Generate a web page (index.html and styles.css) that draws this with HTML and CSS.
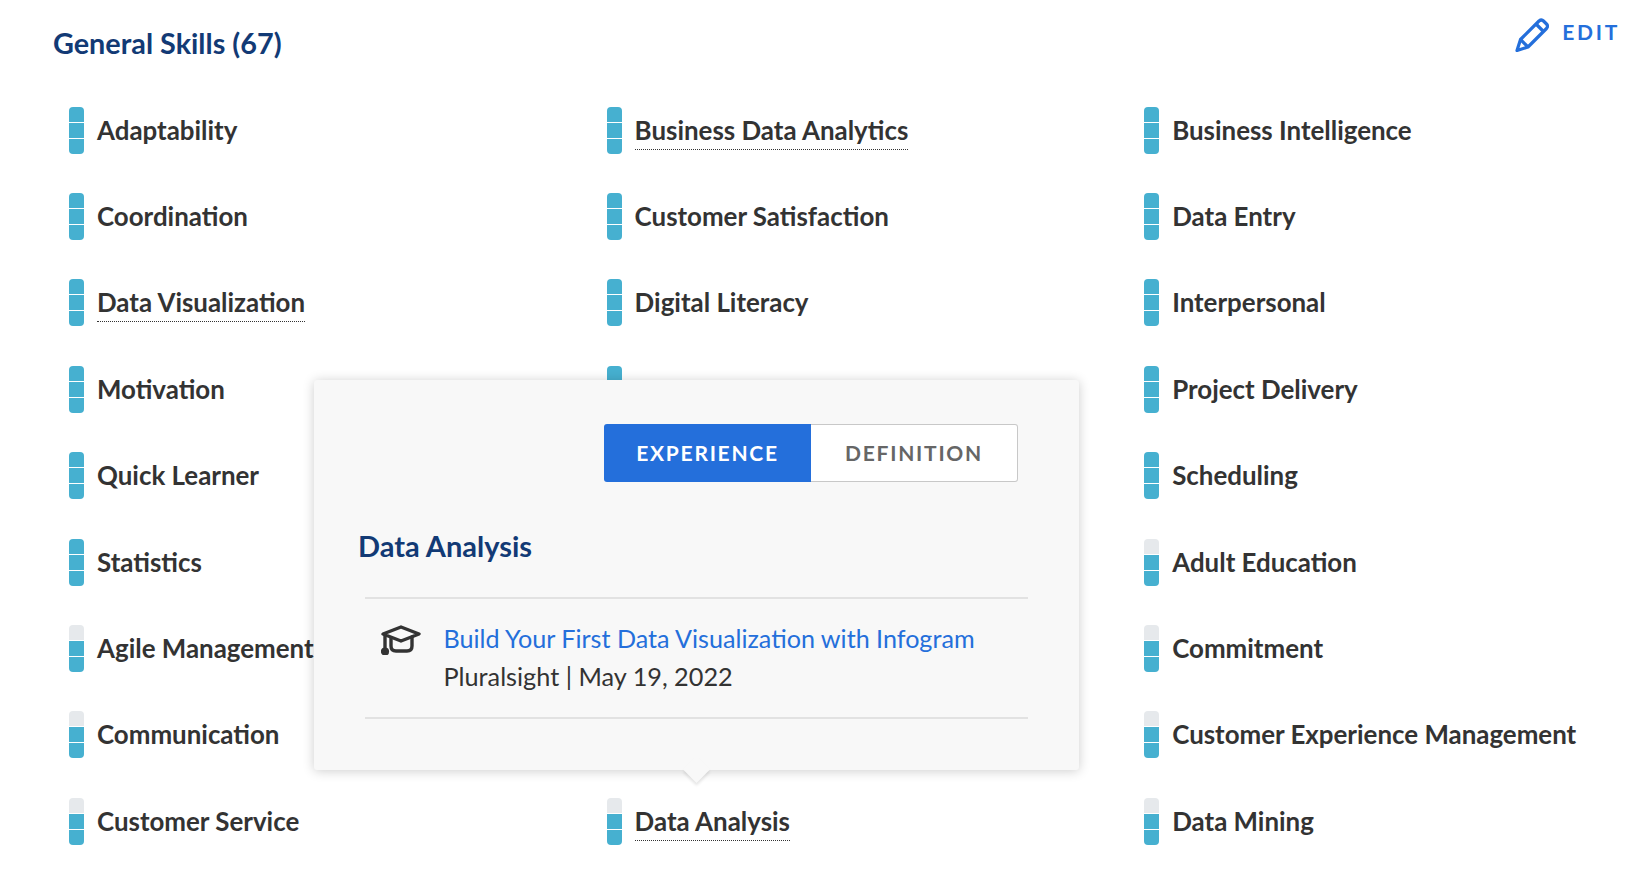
FILE: index.html
```html
<!DOCTYPE html>
<html lang="en">
<head>
  <meta charset="UTF-8" />
  <title>General Skills</title>
  <link rel="stylesheet" href="styles.css">
</head>
<body>

  <header class="skills-head">
    <h2>General Skills (67)</h2>
    <a class="edit-btn">
      <svg class="edit-icon" viewBox="0 0 34 34" fill="none" stroke="currentColor" stroke-width="3.2" stroke-linejoin="round">
        <path d="M2 32.5 L5.5 21.5 L24 3 Q26.5 1 28.5 3 L31.5 6 Q33.5 8 31.5 10.5 L13 29 Z"/>
        <path d="M21 6 L28.5 13.5"/>
        <path d="M5.5 21.5 L13 29"/>
      </svg>
      EDIT
    </a>
  </header>

  <div class="skills-grid">
    <div class="skill"><span class="bar"><i></i><i></i><i></i></span><span class="name">Adaptability</span></div>
    <div class="skill"><span class="bar"><i></i><i></i><i></i></span><span class="name dotted">Business Data Analytics</span></div>
    <div class="skill"><span class="bar"><i></i><i></i><i></i></span><span class="name">Business Intelligence</span></div>

    <div class="skill"><span class="bar"><i></i><i></i><i></i></span><span class="name">Coordination</span></div>
    <div class="skill"><span class="bar"><i></i><i></i><i></i></span><span class="name">Customer Satisfaction</span></div>
    <div class="skill"><span class="bar"><i></i><i></i><i></i></span><span class="name">Data Entry</span></div>

    <div class="skill"><span class="bar"><i></i><i></i><i></i></span><span class="name dotted">Data Visualization</span></div>
    <div class="skill"><span class="bar"><i></i><i></i><i></i></span><span class="name">Digital Literacy</span></div>
    <div class="skill"><span class="bar"><i></i><i></i><i></i></span><span class="name">Interpersonal</span></div>

    <div class="skill"><span class="bar"><i></i><i></i><i></i></span><span class="name">Motivation</span></div>
    <div class="skill"><span class="bar"><i></i><i></i><i></i></span></div>
    <div class="skill"><span class="bar"><i></i><i></i><i></i></span><span class="name">Project Delivery</span></div>

    <!-- middle column is covered by the popover on these rows -->
    <div class="skill"><span class="bar"><i></i><i></i><i></i></span><span class="name">Quick Learner</span></div>
    <div class="skill"></div>
    <div class="skill"><span class="bar"><i></i><i></i><i></i></span><span class="name">Scheduling</span></div>

    <div class="skill"><span class="bar"><i></i><i></i><i></i></span><span class="name">Statistics</span></div>
    <div class="skill"></div>
    <div class="skill"><span class="bar two"><i></i><i></i><i></i></span><span class="name">Adult Education</span></div>

    <div class="skill"><span class="bar two"><i></i><i></i><i></i></span><span class="name">Agile Management</span></div>
    <div class="skill"></div>
    <div class="skill"><span class="bar two"><i></i><i></i><i></i></span><span class="name">Commitment</span></div>

    <div class="skill"><span class="bar two"><i></i><i></i><i></i></span><span class="name">Communication</span></div>
    <div class="skill"></div>
    <div class="skill"><span class="bar two"><i></i><i></i><i></i></span><span class="name">Customer Experience Management</span></div>

    <div class="skill"><span class="bar two"><i></i><i></i><i></i></span><span class="name">Customer Service</span></div>
    <div class="skill"><span class="bar two"><i></i><i></i><i></i></span><span class="name dotted">Data Analysis</span></div>
    <div class="skill"><span class="bar two"><i></i><i></i><i></i></span><span class="name">Data Mining</span></div>
  </div>

  <!-- popover for the hovered skill -->
  <div class="popover">
    <div class="tabs">
      <a class="tab active">EXPERIENCE</a>
      <a class="tab">DEFINITION</a>
    </div>
    <h3>Data Analysis</h3>
    <div class="course">
      <svg class="cap-icon" viewBox="0 0 40 30" fill="none" stroke="#333" stroke-width="3.4" stroke-linejoin="round" stroke-linecap="round">
        <path d="M20 2 L38 9 L20 16 L2 9 Z"/>
        <path d="M10 13 V21 Q10 26 15 26 H26 Q31 26 31 21 V12"/>
        <path d="M4 10 V25"/>
        <circle cx="4" cy="26.5" r="2.4" fill="#333"/>
      </svg>
      <div>
        <a class="course-link">Build Your First Data Visualization with Infogram</a>
        <div class="course-meta">Pluralsight | May 19, 2022</div>
      </div>
    </div>
  </div>

</body>
</html>
```

FILE: styles.css
```css
body {
  font-family: 'Lato', sans-serif;
  background-color: #fff;
  color: #333;
  margin: 0;
  padding: 0;
  height: 872px;
  overflow: hidden;
  position: relative;
}
.skills-head {
  display: flex;
  justify-content: space-between;
  height: 87px;
  padding: 0 20px 0 53px;
}
.skills-head h2 {
  margin: 25px 0 0;
  font-size: 28.8px;
  line-height: 36px;
  font-weight: 700;
  color: #123a75;
}
.edit-btn {
  display: flex;
  align-items: flex-start;
  gap: 13px;
  height: 34px;
  margin-top: 18px;
  color: #246fdb;
  font-size: 21px;
  line-height: 28px;
  font-weight: 700;
  letter-spacing: 2.7px;
}
.edit-icon {
  width: 34px;
  height: 34px;
}
.skills-grid {
  display: grid;
  grid-template-columns: repeat(3, 537.6px);
  grid-auto-rows: 86.4px;
  padding-left: 53px;
}
.skill {
  display: flex;
  align-items: center;
  gap: 13px;
  padding-left: 16px;
}
.bar {
  display: flex;
  flex-direction: column;
  gap: 1px;
  width: 15px;
  height: 47px;
  border-radius: 4px;
  overflow: hidden;
  flex-shrink: 0;
}
.bar i {
  flex: 1;
  background-color: #46b0d0;
}
.bar.two i:first-child {
  background-color: #e6e9ec;
}
.name {
  font-size: 25.9px;
  line-height: 36px;
  font-weight: 700;
  white-space: nowrap;
  margin-bottom: 1px;
}
.name.dotted {
  border-bottom: 1px dotted #333;
  padding-bottom: 1px;
  margin-bottom: -1px;
}
.popover {
  position: absolute;
  left: 314px;
  top: 380px;
  width: 765px;
  height: 390px;
  box-sizing: border-box;
  padding: 44px 46px 0 44px;
  background-color: #f8f8f8;
  border-radius: 3px;
  box-shadow: 0 1px 12px rgba(0, 0, 0, 0.2);
}
.popover::after {
  content: "";
  position: absolute;
  left: 373px;
  bottom: -9px;
  width: 19px;
  height: 19px;
  background-color: #f8f8f8;
  transform: rotate(45deg);
  box-shadow: 2px 2px 3px rgba(0, 0, 0, 0.1);
}
.tabs {
  display: flex;
  justify-content: flex-end;
  margin-right: 15px;
}
.tab {
  width: 207px;
  height: 58px;
  box-sizing: border-box;
  display: flex;
  align-items: center;
  justify-content: center;
  padding-bottom: 1px;
  background-color: #fff;
  border: 1px solid #c8c8c8;
  border-left: none;
  border-radius: 0 3px 3px 0;
  color: #666;
  font-size: 21px;
  font-weight: 700;
  letter-spacing: 1.75px;
}
.tab.active {
  background-color: #246fdb;
  border: none;
  border-radius: 3px 0 0 3px;
  color: #fff;
}
.popover h3 {
  margin: 46px 0 0;
  font-size: 29px;
  line-height: 36px;
  font-weight: 700;
  color: #123a75;
}
.course {
  display: flex;
  gap: 22.5px;
  margin: 33px 5px 0 7px;
  width: 663px;
  box-sizing: border-box;
  padding: 20px 16px 22px;
  border-top: 2px solid #e2e2e2;
  border-bottom: 2px solid #e2e2e2;
}
.cap-icon {
  width: 40px;
  height: 30px;
  margin-top: 6px;
}
.course-link {
  display: block;
  font-size: 25.15px;
  line-height: 38px;
  color: #246fdb;
}
.course-meta {
  font-size: 25.25px;
  line-height: 38px;
}
```
